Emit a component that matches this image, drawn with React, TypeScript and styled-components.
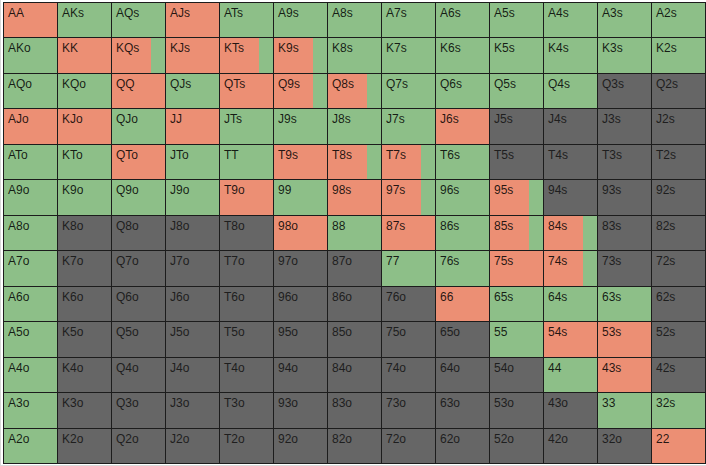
import React from 'react';
import styled, { createGlobalStyle, css } from 'styled-components';

const GlobalStyle = createGlobalStyle`
  html, body {
    margin: 0;
    padding: 0;
    background: #ffffff;
  }
`;

const RANKS = 'AKQJT98765432'.split('');

// r = raise, g = call, x = fold, m = mixed (mostly raise, some call)
const CHART = [
    'rggrggggggggg',
    'grmrmmggggggg',
    'ggrgrmmggggxx',
    'rrgrggggrxxxx',
    'ggrggrmmgxxxx',
    'ggggrgrmgmxxx',
    'gxxxxrgrgmmxx',
    'gxxxxxxggrmxx',
    'gxxxxxxxrgggx',
    'gxxxxxxxxgrrx',
    'gxxxxxxxxxgrx',
    'gxxxxxxxxxxgg',
    'gxxxxxxxxxxxr',
];

const GREEN = '#8dbf88';
const SALMON = '#ec8f74';
const GREY = '#666666';

type Kind = 'r' | 'g' | 'x' | 'm';

const Frame = styled.div`
    width: 706px;
    height: 466px;
    box-sizing: border-box;
    padding: 2px 0 0 2px;
    border-left: 1px solid #d8d8d8;
    border-bottom: 1px solid #d8d8d8;
`;

const Grid = styled.div`
    width: 703px;
    height: 462px;
    box-sizing: border-box;
    display: grid;
    grid-template-columns: repeat(13, 1fr);
    grid-template-rows: repeat(13, 1fr);
    gap: 1px;
    padding: 1px;
    background: #1c1c1c;
`;

const Cell = styled.div<{ $kind: Kind }>`
    padding: 3px 0 0 4px;
    font-family: "Liberation Sans", Arial, sans-serif;
    font-size: 12px;
    line-height: 14px;
    color: rgba(0, 0, 0, 0.85);
    overflow: hidden;
    ${({ $kind }) => {
        if ($kind === 'r') return css`background: ${SALMON};`;
        if ($kind === 'g') return css`background: ${GREEN};`;
        if ($kind === 'm') return css`background: linear-gradient(to right, ${SALMON} 74%, ${GREEN} 74%);`;
        return css`
            background: ${GREY};
            color: #1e1e1e;
        `;
    }}
`;

const handName = (row: number, col: number) => {
    if (row === col) return RANKS[row] + RANKS[col];
    if (col > row) return RANKS[row] + RANKS[col] + 's';
    return RANKS[col] + RANKS[row] + 'o';
};

const App = () => {
    return (
        <>
            <GlobalStyle />
            <Frame>
                <Grid>
                    {CHART.map((line, row) =>
                        line.split('').map((k, col) => (
                            <Cell key={row + '-' + col} $kind={k as Kind}>
                                {handName(row, col)}
                            </Cell>
                        ))
                    )}
                </Grid>
            </Frame>
        </>
    );
};

export default App;
